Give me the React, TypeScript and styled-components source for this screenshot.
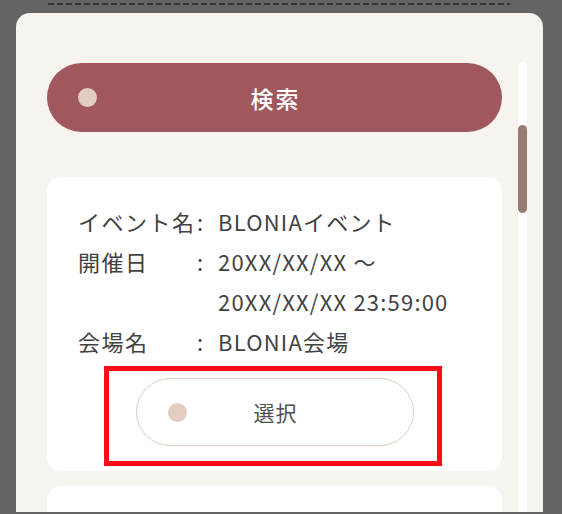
import React from 'react'
import styled, { createGlobalStyle } from 'styled-components'

const rose = '#a0585e'
const blush = '#e3cdc2'
const cream = '#f7f4ef'
const ink = '#424242'

const GlobalStyle = createGlobalStyle`
  html, body {
    margin: 0;
    padding: 0;
    background: #646464;
  }
  body {
    font-family: "Noto Sans CJK JP", "Noto Sans", sans-serif;
    color: ${ink};
  }
`

const Screen = styled.div`
  height: 512px;
  overflow: hidden;
  padding: 0 19px 0 16px;
  display: flex;
  flex-direction: column;
  box-sizing: border-box;
`

const DashRule = styled.div`
  margin: 3px 33px 0 32px;
  height: 2px;
  flex: none;
  background: repeating-linear-gradient(90deg, #353535 0 6px, transparent 6px 9px);
`

const Panel = styled.div`
  margin-top: 8px;
  flex: 1;
  min-height: 0;
  background: ${cream};
  border-radius: 14px 14px 0 0;
  display: flex;
  align-items: flex-start;
  padding: 50px 16px 0 31px;
  overflow: hidden;
`

const Content = styled.div`
  width: 455px;
  flex: none;
  display: flex;
  flex-direction: column;
  gap: 15px;
`

const ScrollTrack = styled.div`
  align-self: stretch;
  margin: -1px 0 0 16px;
  width: 9px;
  flex: none;
  background: #fff;
  border-radius: 5px 5px 0 0;
  padding-top: 63px;
`

const ScrollThumb = styled.div`
  width: 9px;
  height: 88px;
  border-radius: 5px;
  background: #977d70;
`

const PillButton = styled.button<{ variant: 'filled' | 'outline' }>`
  position: relative;
  flex: none;
  display: grid;
  grid-template-columns: 1fr auto 1fr;
  align-items: center;
  box-sizing: border-box;
  border-radius: 40px;
  font-family: inherit;
  cursor: pointer;
  ${props => props.variant === 'filled' ? `
    width: 100%;
    height: 69px;
    border: none;
    background: ${rose};
    color: #fff;
    font-size: 23px;
    font-weight: 500;
    letter-spacing: 2px;
    padding: 0 31px;
    margin-bottom: 30px;
  ` : `
    width: 278px;
    height: 68px;
    border: 1.5px solid ${blush};
    background: #fff;
    color: #505050;
    font-size: 21px;
    letter-spacing: 1px;
    padding: 0 31px;
  `}
`

const Dot = styled.span`
  justify-self: start;
  width: 19px;
  height: 19px;
  border-radius: 50%;
  background: ${blush};
`

const Label = styled.span`
  padding-left: 2px;
`

const Card = styled.div<{ peek?: boolean }>`
  flex: none;
  background: #fff;
  border-radius: 14px;
  padding: 24px 31px 25px;
  display: flex;
  flex-direction: column;
  align-items: center;
  ${props => props.peek && 'height: 120px;'}
`

const InfoGrid = styled.dl`
  align-self: stretch;
  margin: 0;
  display: grid;
  grid-template-columns: 118px 22px 1fr;
  font-size: 22px;
  line-height: 40px;
  letter-spacing: 1.5px;
  white-space: nowrap;
`

const Term = styled.dt`
  margin: 0;
`

const Colon = styled.span`
  padding-left: 1px;
`

const Value = styled.dd`
  margin: 0;
  letter-spacing: 1.2px;
`

const Highlight = styled.span`
  position: absolute;
  left: -33px;
  right: -29px;
  top: -13px;
  bottom: -21px;
  border: 5px solid #ff0a16;
  pointer-events: none;
`

const SelectRow = styled.div`
  margin-top: 17px;
`

interface EventInfo {
  name: string
  date: string[]
  venue: string
}

const events: EventInfo[] = [
  { name: 'BLONIAイベント', date: ['20XX/XX/XX ～', '20XX/XX/XX 23:59:00'], venue: 'BLONIA会場' },
]

const EventCard = ({ event, marked }: { event: EventInfo, marked?: boolean }) => (
  <Card>
    <InfoGrid>
      <Term>イベント名</Term><Colon>:</Colon><Value>{event.name}</Value>
      <Term>開催日</Term><Colon>:</Colon>
      <Value>{event.date.map(line => <div key={line}>{line}</div>)}</Value>
      <Term>会場名</Term><Colon>:</Colon><Value>{event.venue}</Value>
    </InfoGrid>
    <SelectRow>
      <PillButton variant="outline">
        <Dot />
        <Label>選択</Label>
        {marked && <Highlight />}
      </PillButton>
    </SelectRow>
  </Card>
)

export default function App() {
  return (
    <>
      <GlobalStyle />
      <Screen>
        <DashRule />
        <Panel>
          <Content>
            <PillButton variant="filled">
              <Dot />
              <Label>検索</Label>
            </PillButton>
            {events.map((event, index) => (
              <EventCard key={index} event={event} marked={index === 0} />
            ))}
            {/* next result, scrolled below the fold */}
            <Card peek />
          </Content>
          <ScrollTrack>
            <ScrollThumb />
          </ScrollTrack>
        </Panel>
      </Screen>
    </>
  )
}
